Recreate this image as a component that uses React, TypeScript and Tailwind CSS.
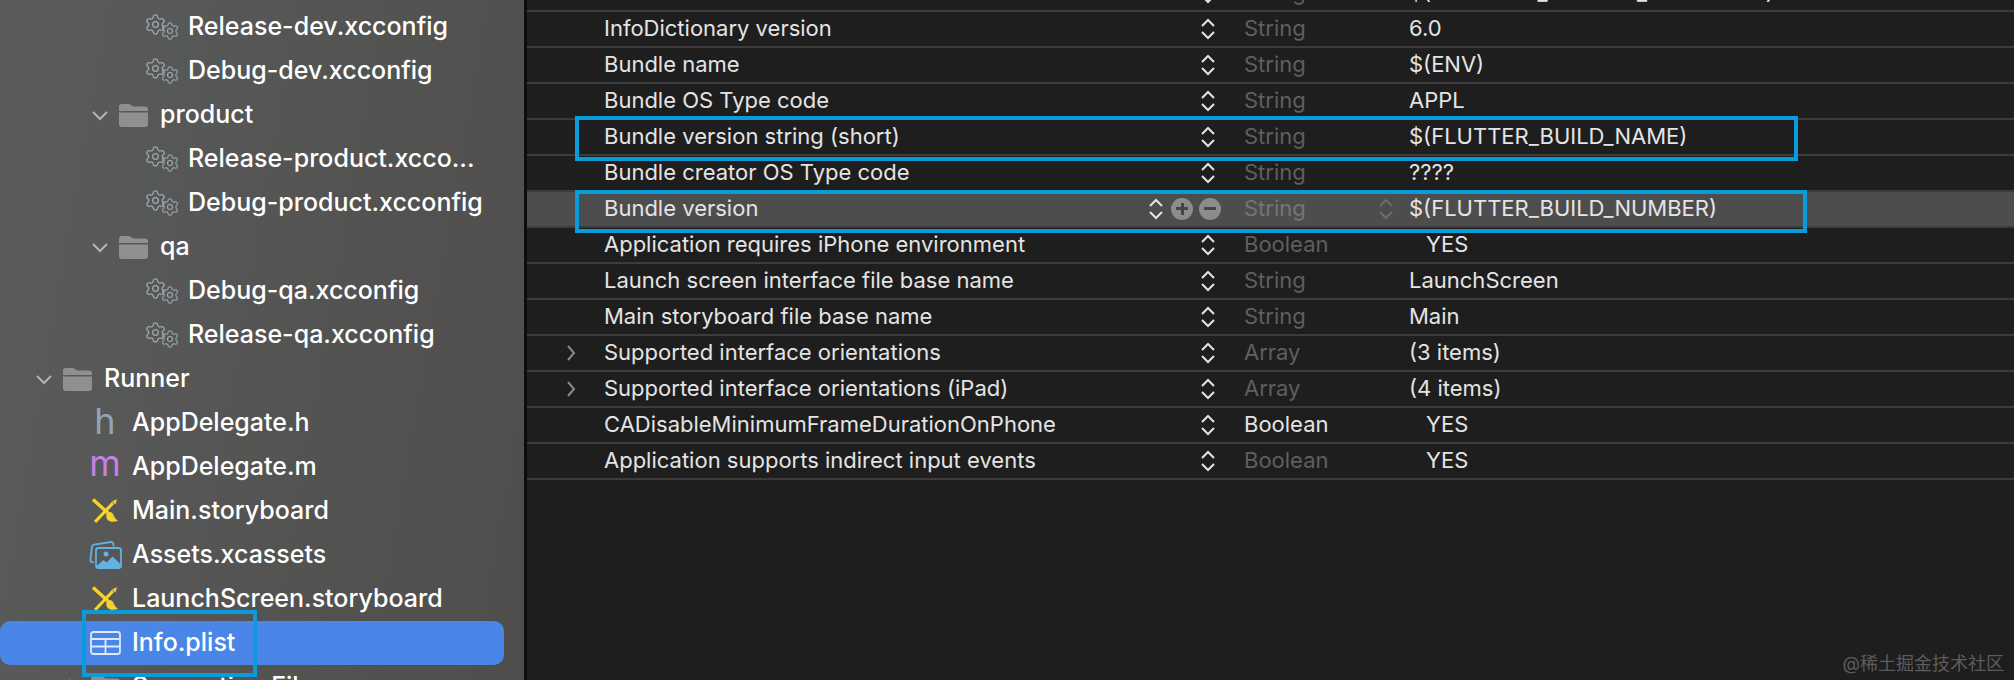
import React from "react";
import { Settings } from "lucide-react";

const FONT = "font-['Inter','Noto_Sans_CJK_SC',sans-serif]";

type NavItem = { kind: string; name: string; pl?: string; open?: boolean; selected?: boolean };

const NAV_ITEMS: NavItem[] = [
  { kind: "gear", name: "Release-dev.xcconfig" },
  { kind: "gear", name: "Debug-dev.xcconfig" },
  { kind: "folder", name: "product", pl: "pl-[92px]", open: true },
  { kind: "gear", name: "Release-product.xcco..." },
  { kind: "gear", name: "Debug-product.xcconfig" },
  { kind: "folder", name: "qa", pl: "pl-[92px]", open: true },
  { kind: "gear", name: "Debug-qa.xcconfig" },
  { kind: "gear", name: "Release-qa.xcconfig" },
  { kind: "folder", name: "Runner", pl: "pl-[36px]", open: true },
  { kind: "h", name: "AppDelegate.h" },
  { kind: "m", name: "AppDelegate.m" },
  { kind: "storyboard", name: "Main.storyboard" },
  { kind: "assets", name: "Assets.xcassets" },
  { kind: "storyboard", name: "LaunchScreen.storyboard" },
  { kind: "plist", name: "Info.plist", selected: true },
  { kind: "folder", name: "Supporting Files", pl: "pl-[64px]" },
];

type Row = { key: string; type: string; value: string; expand?: boolean; yes?: boolean; hover?: boolean; bright?: boolean };

const ROWS: Row[] = [
  { key: "Bundle identifier", type: "String", value: "$(PRODUCT_BUNDLE_IDENTIFIER)" },
  { key: "InfoDictionary version", type: "String", value: "6.0" },
  { key: "Bundle name", type: "String", value: "$(ENV)" },
  { key: "Bundle OS Type code", type: "String", value: "APPL" },
  { key: "Bundle version string (short)", type: "String", value: "$(FLUTTER_BUILD_NAME)" },
  { key: "Bundle creator OS Type code", type: "String", value: "????" },
  { key: "Bundle version", type: "String", value: "$(FLUTTER_BUILD_NUMBER)", hover: true },
  { key: "Application requires iPhone environment", type: "Boolean", value: "YES", yes: true },
  { key: "Launch screen interface file base name", type: "String", value: "LaunchScreen" },
  { key: "Main storyboard file base name", type: "String", value: "Main" },
  { key: "Supported interface orientations", type: "Array", value: "(3 items)", expand: true },
  { key: "Supported interface orientations (iPad)", type: "Array", value: "(4 items)", expand: true },
  { key: "CADisableMinimumFrameDurationOnPhone", type: "Boolean", value: "YES", yes: true, bright: true },
  { key: "Application supports indirect input events", type: "Boolean", value: "YES", yes: true },
];

function Chevron({ open, className }: { open?: boolean; className?: string }) {
  return (
    <svg width="16" height="16" viewBox="0 0 16 16" fill="none" stroke="currentColor" strokeWidth="2" className={className}>
      {open ? <path d="M1 5l7 7 7-7" /> : <path d="M5 1l6 7-6 7" />}
    </svg>
  );
}

function Folder() {
  return (
    <svg width="29" height="24" viewBox="0 0 29 24" className="shrink-0">
      <path d="M0 4a3 3 0 0 1 3-3h7c2 0 2.500 2.500 5 2.500h11a3 3 0 0 1 3 3V8H0z" fill="#8f9091" />
      <path d="M0 9.500h29V21a3 3 0 0 1-3 3H3a3 3 0 0 1-3-3z" fill="#8f9091" />
    </svg>
  );
}

function Gears() {
  return (
    <div className="w-[36px] h-[28px] relative shrink-0 text-[#9fabb0]">
      <Settings size={23} strokeWidth={1.3} className="absolute left-0 top-0" />
      <Settings size={20} strokeWidth={1.3} className="absolute right-0 bottom-0" />
    </div>
  );
}

function StoryboardIcon() {
  return (
    <svg width="28" height="26" viewBox="0 0 28 26" fill="none" className="shrink-0">
      <path d="M2 1.500L17 15" stroke="#f6d32a" strokeWidth="3.400" />
      <path d="M16 15c2-2 5-1 6 1 1 2 2 5 5 7-4 1.500-9 1-11-2-1-2-1-4 0-6z" fill="#f6d32a" />
      <path d="M4 24L22 5" stroke="#f6d32a" strokeWidth="3.200" />
      <path d="M21 3.500l5-2.500-1.500 5.500z" fill="#f6d32a" />
    </svg>
  );
}

function AssetsIcon() {
  return (
    <svg width="33" height="28" viewBox="0 0 33 28" fill="none" className="shrink-0">
      <path d="M5 21.500L3 21a2 2 0 0 1-1.500-2.500L3 5.500a2 2 0 0 1 2.200-1.800L22 1a2 2 0 0 1 2.300 1.800l.3 2.500" stroke="#62b2e2" strokeWidth="1.800" />
      <rect x="7" y="7" width="25" height="20" rx="2.500" stroke="#62b2e2" strokeWidth="1.800" />
      <circle cx="17" cy="13" r="2.500" fill="#62b2e2" />
      <path d="M7.500 25l7-6 3 2.500 6-6 8 7.500v3a1.500 1.500 0 0 1-1.500 1.500H9a1.500 1.500 0 0 1-1.500-1.500z" fill="#62b2e2" />
    </svg>
  );
}

function PlistIcon() {
  return (
    <svg width="31" height="24" viewBox="0 0 31 24" fill="none" stroke="#dfe9fb" strokeWidth="1.800" className="shrink-0">
      <rect x="1" y="1" width="29" height="22" rx="2.500" />
      <path d="M1 8h29M1 15.500h29M15.500 8v15" />
    </svg>
  );
}

function NavRow({ item }: { item: NavItem }) {
  if (item.kind === "folder") {
    return (
      <div className={`h-[44px] flex items-center ${item.pl}`}>
        <Chevron open={item.open} className="text-[#b5b5b5] shrink-0" />
        <div className="ml-[11px]">
          <Folder />
        </div>
        <span className="ml-[12px] whitespace-nowrap">{item.name}</span>
      </div>
    );
  }

  if (item.kind === "gear") {
    return (
      <div className="h-[44px] flex items-center pl-[144px]">
        <Gears />
        <span className="ml-[8px] whitespace-nowrap">{item.name}</span>
      </div>
    );
  }

  return (
    <div className={`h-[44px] flex items-center pl-[87px] rounded-[10px] w-[504px] ${item.selected ? "bg-[#4a86e8]" : ""}`}>
      <div className="w-[36px] flex items-center justify-center">
        {item.kind === "h" && <span className="text-[36px] font-normal leading-none text-[#94a4b2] -mt-[4px]">h</span>}
        {item.kind === "m" && <span className="text-[36px] font-normal leading-none text-[#c67fe8] -mt-[8px]">m</span>}
        {item.kind === "storyboard" && <StoryboardIcon />}
        {item.kind === "assets" && <AssetsIcon />}
        {item.kind === "plist" && <PlistIcon />}
      </div>
      <span className="ml-[9px] whitespace-nowrap">{item.name}</span>
    </div>
  );
}

function Stepper({ muted }: { muted?: boolean }) {
  return (
    <svg width="16" height="24" viewBox="0 0 16 24" fill="none" stroke={muted ? "#6c6c6c" : "#e4e4e4"} strokeWidth="2" className="shrink-0">
      <path d="M2 9l6-6 6 6M2 15l6 6 6-6" />
    </svg>
  );
}

function RoundButton({ plus }: { plus?: boolean }) {
  return (
    <div className="w-[22px] h-[22px] rounded-full bg-[#8c8c8c] flex items-center justify-center relative shrink-0">
      <div className="w-[12px] h-[3px] bg-[#444444]" />
      {plus && <div className="w-[3px] h-[12px] bg-[#444444] absolute" />}
    </div>
  );
}

function PlistRow({ row }: { row: Row }) {
  const typeColor = row.bright ? "text-[#e4e4e4]" : row.hover ? "text-[#757575]" : "text-[#5f5f5f]";
  return (
    <div className={`h-[36px] pb-[1px] flex items-center border-b-2 border-[#3c3c3c] text-[22px] text-[#e4e4e4] ${row.hover ? "bg-[#4d4d4d]" : ""}`}>
      <div className="w-[77px] pl-[36px] text-[#8a8a8a]">{row.expand && <Chevron />}</div>
      <div className="w-[540px] whitespace-nowrap">{row.key}</div>
      <div className="w-[78px] flex items-center justify-end pr-[1px]">
        <Stepper />
        {row.hover ? (
          <>
            <div className="ml-[7px]"><RoundButton plus /></div>
            <div className="ml-[6px]"><RoundButton /></div>
          </>
        ) : (
          <div className="w-[5px]" />
        )}
      </div>
      <div className={`ml-[22px] w-[134px] ${typeColor}`}>{row.type}</div>
      <div className="w-[31px]">{row.hover && <Stepper muted />}</div>
      <div className={`whitespace-nowrap ${row.yes ? "pl-[17px]" : ""}`}>{row.value}</div>
    </div>
  );
}

export default function App() {
  return (
    <div className={`${FONT} relative w-[2014px] h-[680px] overflow-hidden flex bg-[#1e1e1e]`}>
      <aside className="w-[524px] h-full overflow-hidden shrink-0 pt-[5px] text-[25px] font-medium text-white bg-[linear-gradient(100deg,#5a5c5c_0%,#535352_60%,#504e4d_100%)]">
        {NAV_ITEMS.map((item) => (
          <NavRow key={item.name} item={item} />
        ))}
      </aside>
      <div className="w-[3px] bg-[#0d0d0d] shrink-0" />
      <main className="flex-1 overflow-hidden -mt-[24px]">
        {ROWS.map((row) => (
          <PlistRow key={row.key} row={row} />
        ))}
      </main>

      {/* annotation boxes drawn over the screenshot */}
      <div className="absolute left-[575px] top-[116px] w-[1223px] h-[45px] border-4 border-[#0a9bdb]" />
      <div className="absolute left-[575px] top-[190px] w-[1232px] h-[43px] border-4 border-[#0a9bdb]" />
      <div className="absolute left-[82px] top-[610px] w-[175px] h-[67px] border-4 border-[#0a9bdb]" />

      <div className="absolute right-[10px] top-[650px] text-[18px] text-[#5c5c5c] whitespace-nowrap">@稀土掘金技术社区</div>
    </div>
  );
}
